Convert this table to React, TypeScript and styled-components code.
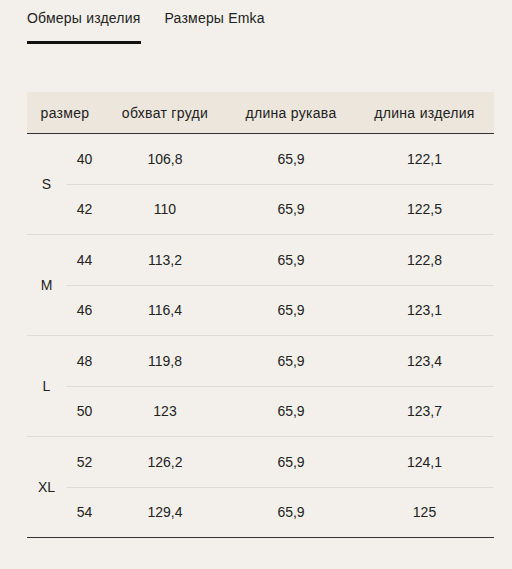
import React from "react";
import styled, { createGlobalStyle } from "styled-components";

const GlobalStyle = createGlobalStyle`
  body {
    margin: 0;
    background: #f3f0eb;
    font-family: "Liberation Sans", Arial, sans-serif;
    color: #222;
  }
`;

const Page = styled.div`
  padding: 0 18px 0 27px;
`;

const Tabs = styled.div`
  display: flex;
  gap: 24px;
  height: 44px;
`;

const Tab = styled.div<{ $active?: boolean }>`
  font-size: 14px;
  line-height: 16px;
  letter-spacing: 0.2px;
  padding-top: 10px;
  height: 16px;
  padding-bottom: 15px;
  border-bottom: 3px solid ${(p) => (p.$active ? "#111" : "transparent")};
  cursor: pointer;
`;

const Table = styled.table`
  margin-top: 48px;
  width: 467px;
  border-collapse: collapse;
  font-size: 14px;
`;

const HeadCell = styled.th`
  background: #ede6dc;
  font-weight: normal;
  letter-spacing: 0.3px;
  height: 41px;
  padding: 0;
  text-align: center;
  border-bottom: 1px solid #333;
`;

const Cell = styled.td<{ $last?: boolean }>`
  height: 49.5px;
  padding: 0;
  text-align: center;
  border-bottom: 1px solid ${(p) => (p.$last ? "#333" : "#e0dbd4")};
`;

const sizes = [
  { label: "S", rows: [["40", "106,8", "65,9", "122,1"], ["42", "110", "65,9", "122,5"]] },
  { label: "M", rows: [["44", "113,2", "65,9", "122,8"], ["46", "116,4", "65,9", "123,1"]] },
  { label: "L", rows: [["48", "119,8", "65,9", "123,4"], ["50", "123", "65,9", "123,7"]] },
  { label: "XL", rows: [["52", "126,2", "65,9", "124,1"], ["54", "129,4", "65,9", "125"]] },
];

export default function App() {
  return (
    <Page>
      <GlobalStyle />
      <Tabs>
        <Tab $active>Обмеры изделия</Tab>
        <Tab>Размеры Emka</Tab>
      </Tabs>
      <Table>
        <colgroup>
          <col style={{ width: 39 }} />
          <col style={{ width: 37 }} />
          <col style={{ width: 124 }} />
          <col style={{ width: 128 }} />
          <col style={{ width: 139 }} />
        </colgroup>
        <thead>
          <tr>
            <HeadCell colSpan={2}>размер</HeadCell>
            <HeadCell>обхват груди</HeadCell>
            <HeadCell>длина рукава</HeadCell>
            <HeadCell>длина изделия</HeadCell>
          </tr>
        </thead>
        <tbody>
          {sizes.map((g, gi) => {
            const lastGroup = gi === sizes.length - 1;
            return g.rows.map((r, ri) => (
              <tr key={`${gi}-${ri}`}>
                {ri === 0 && (
                  <Cell rowSpan={2} $last={lastGroup}>
                    {g.label}
                  </Cell>
                )}
                {r.map((v, i) => (
                  <Cell key={i} $last={lastGroup && ri === 1}>
                    {v}
                  </Cell>
                ))}
              </tr>
            ));
          })}
        </tbody>
      </Table>
    </Page>
  );
}
